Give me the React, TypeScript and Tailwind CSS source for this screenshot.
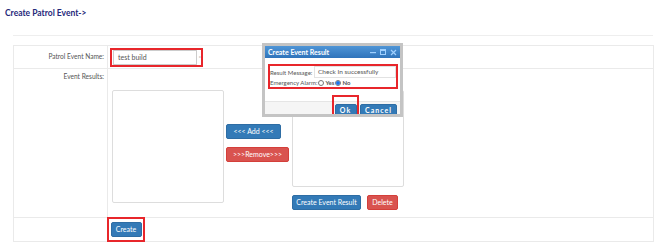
import React from 'react';

const font = { fontFamily: 'Lato, "Open Sans", "Liberation Sans", sans-serif' };

const Btn: React.FC<{ color: 'blue' | 'red'; className?: string; children: React.ReactNode }> = ({ color, className = '', children }) => (
  <button
    className={`flex shrink-0 items-center justify-center whitespace-nowrap rounded-[2px] text-[7px] leading-none text-white ${
      color === 'blue' ? 'bg-[#337ab7] border border-[#2e6da4]' : 'bg-[#d9534f] border border-[#d43f3a]'
    } ${className}`}
  >
    {children}
  </button>
);

const Radio: React.FC<{ checked?: boolean }> = ({ checked }) => (
  <span className="inline-flex h-[6px] w-[6px] shrink-0 items-center justify-center rounded-full border border-[#777] bg-white">
    {checked && <span className="h-[4px] w-[4px] rounded-full bg-[#1a73e8]" />}
  </span>
);

export default function App() {
  return (
    <div className="relative h-[250px] w-[667px] overflow-hidden bg-white text-[#333]" style={font}>
      {/* Page heading */}
      <div className="h-[35px] pl-[5px] pt-[7px]">
        <h1 className="text-[8.5px] font-bold text-[#25287a]">Create Patrol Event-&gt;</h1>
      </div>
      <div className="mx-[13px] w-[640px] border-t border-[#eee]" />

      {/* Form table */}
      <div className="ml-[13px] mt-[9px] w-[641px] border border-[#eaeaea] text-[6.6px] text-[#555]">
        {/* Row 1 */}
        <div className="flex h-[23px] border-b border-[#eaeaea]">
          <div className="flex w-[94px] items-center justify-end border-r border-[#eaeaea] pr-[3px]">Patrol Event Name:</div>
          <div className="flex items-center pl-[2px]">
            <div className="flex h-[19px] w-[93px] items-center border-2 border-[#e8262b] pl-[1px]">
              <div className="flex h-[15px] w-[85px] items-center border border-[#ccc] pl-[4px] text-[7px] text-[#555]">test build</div>
              <span className="ml-[1px] text-[6px] text-[#999]">*</span>
            </div>
          </div>
        </div>

        {/* Row 2 */}
        <div className="flex h-[149px] border-b border-[#eaeaea]">
          <div className="flex w-[94px] justify-end border-r border-[#eaeaea] pr-[3px] pt-[3px]">Event Results:</div>
          <div className="flex items-start">
            <div className="ml-[4px] mt-[21px] h-[113px] w-[112px] rounded-[2px] border border-[#ddd]" />
            <div className="ml-[2px] mt-[55px] flex flex-col items-start gap-[8px]">
              <Btn color="blue" className="h-[15px] w-[55px]">&lt;&lt;&lt; Add &lt;&lt;&lt;</Btn>
              <Btn color="red" className="h-[15px] w-[63px]">&gt;&gt;&gt;Remove&gt;&gt;&gt;</Btn>
            </div>
            <div className="ml-[3px] mt-[21px] flex flex-col">
              <div className="h-[97px] w-[112px] rounded-[2px] border border-[#ddd]" />
              <div className="mt-[8px] flex gap-[6px]">
                <Btn color="blue" className="h-[15px] w-[69px]">Create Event Result</Btn>
                <Btn color="red" className="h-[15px] w-[31px]">Delete</Btn>
              </div>
            </div>
          </div>
        </div>

        {/* Row 3 */}
        <div className="flex h-[23px]">
          <div className="w-[94px] border-r border-[#eaeaea]" />
          <div className="-ml-[1px] -mt-[1px] flex h-[25px] w-[38px] items-center justify-center border-2 border-[#e8262b]">
            <Btn color="blue" className="h-[15px] w-[31px]">Create</Btn>
          </div>
        </div>
      </div>

      {/* Dialog */}
      <div className="absolute left-[262px] top-[43px] flex h-[74px] w-[141px] flex-col overflow-hidden border-[3px] border-[#c4c4c4] bg-white">
        <div className="flex h-[12px] shrink-0 items-center justify-between bg-gradient-to-b from-[#4f95d6] to-[#2f74bb] pl-[3px] pr-[3px]">
          <span className="text-[7px] font-bold text-white">Create Event Result</span>
          <div className="flex items-center gap-[4px] text-[#9fd0ff]">
            <svg width="6" height="6" viewBox="0 0 6 6"><rect x="0" y="3" width="6" height="1.2" fill="currentColor" /></svg>
            <svg width="6" height="6" viewBox="0 0 6 6"><rect x="0.5" y="0.5" width="5" height="5" fill="none" stroke="currentColor" strokeWidth="1" /><rect x="0.5" y="0.5" width="5" height="1.5" fill="currentColor" /></svg>
            <svg width="7" height="7" viewBox="0 0 7 7"><path d="M1 1 L6 6 M6 1 L1 6" stroke="currentColor" strokeWidth="1.2" /></svg>
          </div>
        </div>
        <div className="ml-[3px] mt-[6px] flex h-[25px] w-[130px] shrink-0 flex-col border-2 border-[#e8262b] text-[6px] text-[#555]">
          <div className="flex h-[12px] items-center">
            <span className="w-[44px] shrink-0 whitespace-nowrap pr-[2px]">Result Message:</span>
            <div className="flex h-[12px] flex-1 items-center whitespace-nowrap border border-[#e2e2e2] pl-[3px] text-[6.5px]">Check In successfully</div>
          </div>
          <div className="flex flex-1 items-center gap-[1px] whitespace-nowrap">
            <span>Emergency Alarm:</span>
            <Radio />
            <span className="font-bold">Yes</span>
            <Radio checked />
            <span className="font-bold">No</span>
          </div>
        </div>
        <div className="mt-[12px] flex flex-1 items-start border-t border-[#e5e5e5] bg-[#f5f5f5] pl-[67px]">
          <div className="-mt-[7px] flex h-[24px] w-[27px] shrink-0 items-start justify-center border-2 border-[#e8262b] pt-[7px]">
            <Btn color="blue" className="h-[12px] w-[22px] font-bold tracking-[1px]">Ok</Btn>
          </div>
          <Btn color="blue" className="ml-[1px] mt-[2px] h-[12px] w-[37px] font-bold tracking-[1px]">Cancel</Btn>
        </div>
      </div>
    </div>
  );
}
